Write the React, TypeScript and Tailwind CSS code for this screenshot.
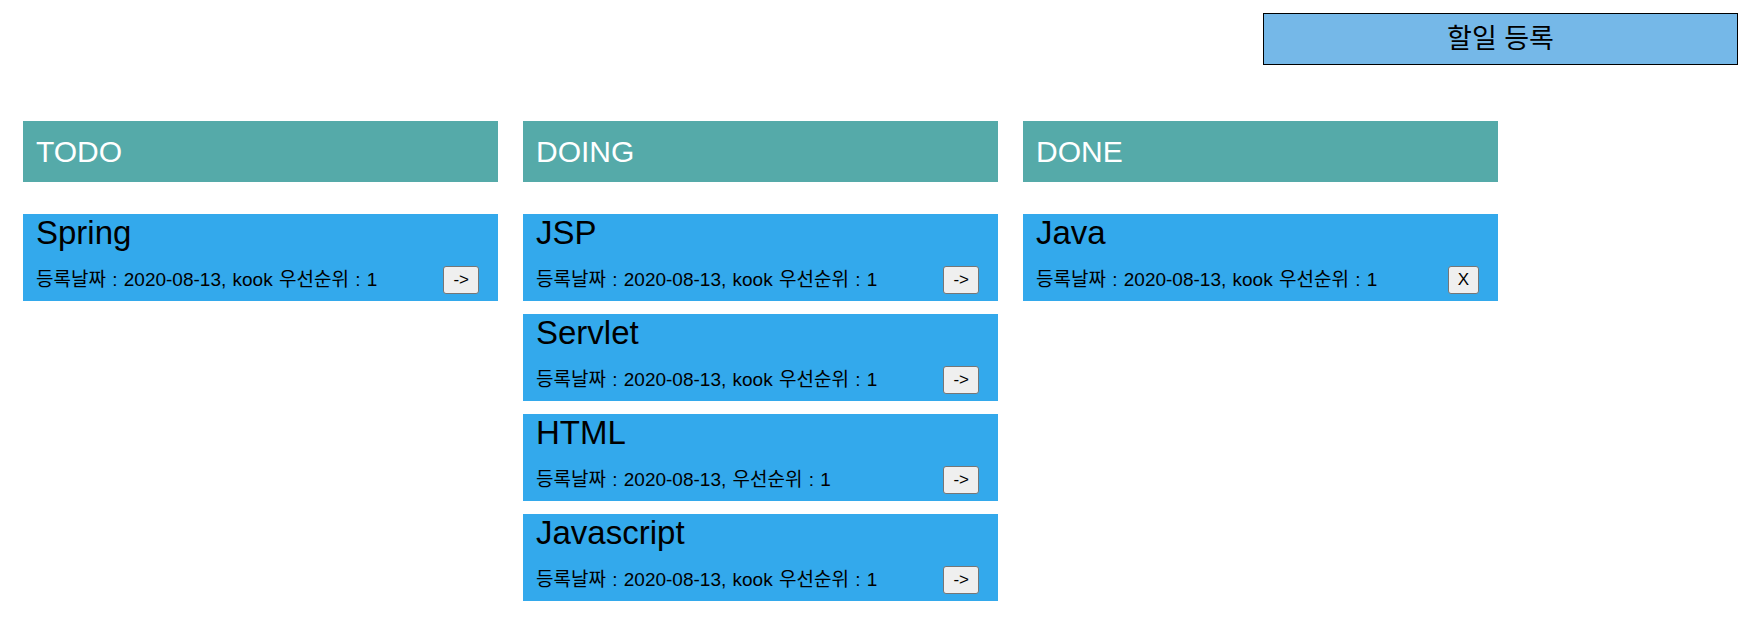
import React from 'react';

type Card = { title: string; date: string; name?: string; priority: number };

const columns: { title: string; action: string; cards: Card[] }[] = [
  { title: 'TODO', action: '->', cards: [{ title: 'Spring', date: '2020-08-13', name: 'kook', priority: 1 }] },
  {
    title: 'DOING',
    action: '->',
    cards: [
      { title: 'JSP', date: '2020-08-13', name: 'kook', priority: 1 },
      { title: 'Servlet', date: '2020-08-13', name: 'kook', priority: 1 },
      { title: 'HTML', date: '2020-08-13', priority: 1 },
      { title: 'Javascript', date: '2020-08-13', name: 'kook', priority: 1 },
    ],
  },
  { title: 'DONE', action: 'X', cards: [{ title: 'Java', date: '2020-08-13', name: 'kook', priority: 1 }] },
];

const font = "font-['Liberation_Sans','Noto_Sans_CJK_KR',sans-serif]";

function TodoCard({ card, action }: { card: Card; action: string }) {
  return (
    <div className="h-[87px] bg-[#33a9ec] pl-[13px] pr-[19px]">
      <div className="text-[33px] leading-[37px] text-black">{card.title}</div>
      <div className="flex items-center justify-between mt-[15px]">
        <span className="text-[19px] leading-[22px] [word-spacing:1px] text-black">
          등록날짜 : {card.date}, {card.name ? `${card.name} ` : ''}우선순위 : {card.priority}
        </span>
        <button className="h-[28px] px-[9px] text-[17px] leading-[20px] bg-[#efefef] border border-[#767676] rounded-[3px] text-black">
          {action}
        </button>
      </div>
    </div>
  );
}

export default function App() {
  return (
    <div className={`min-h-screen bg-white ${font}`}>
      <div className="flex justify-end pt-[13px] pr-[17px]">
        <button className="w-[475px] h-[52px] bg-[#75b8e8] border border-black text-[27px] text-black">
          할일 등록
        </button>
      </div>
      <div className="flex gap-[25px] pl-[23px] mt-[56px]">
        {columns.map(col => (
          <div key={col.title} className="w-[475px] flex flex-col">
            <div className="h-[61px] bg-[#55aaa9] flex items-center pl-[13px] text-[30px] text-white">
              {col.title}
            </div>
            <div className="mt-[32px] flex flex-col gap-[13px]">
              {col.cards.map(card => (
                <TodoCard key={card.title} card={card} action={col.action} />
              ))}
            </div>
          </div>
        ))}
      </div>
    </div>
  );
}
